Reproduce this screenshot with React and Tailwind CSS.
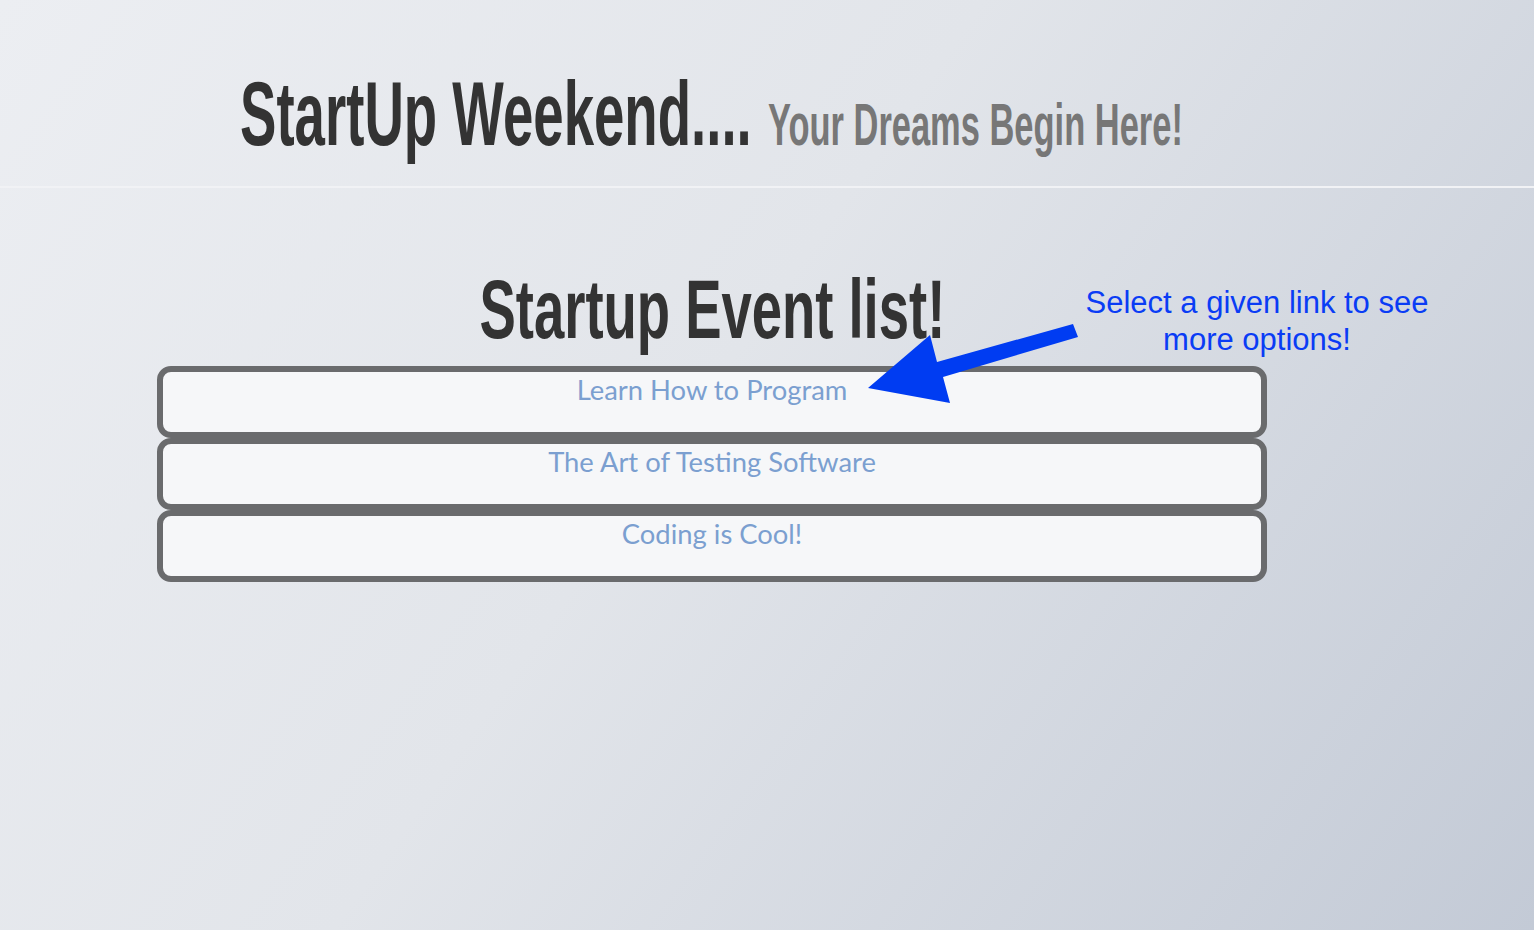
import React from "react";

const events = [
  "Learn How to Program",
  "The Art of Testing Software",
  "Coding is Cool!",
];

export default function App() {
  return (
    <div className="relative min-h-screen w-full overflow-hidden bg-[linear-gradient(125deg,#eceef2_0%,#e2e5ea_45%,#c3cad6_100%)]">
      {/* header */}
      <div className="h-[188px] border-b-2 border-[#f1f2f5] pt-[68px] pl-[240px]">
        <div className="flex items-baseline whitespace-nowrap font-['Liberation_Sans',Arial,sans-serif] font-bold leading-none">
          <div className="w-[528px]">
            <span className="inline-block origin-left scale-x-[0.6] text-[91px] text-[#333333]">
              StartUp Weekend....
            </span>
          </div>
          <div>
            <span className="inline-block origin-left scale-x-[0.584] text-[59px] text-[#777777]">
              Your Dreams Begin Here!
            </span>
          </div>
        </div>
      </div>

      {/* event list */}
      <div className="ml-[157px] mt-[79px] w-[1110px]">
        <h1 className="whitespace-nowrap text-center font-['Liberation_Sans',Arial,sans-serif] text-[84px] font-bold leading-none text-[#333333]">
          <span className="inline-block scale-x-[0.648]">Startup Event list!</span>
        </h1>
        <div className="mt-[15px] flex flex-col">
          {events.map((ev) => (
            <a
              key={ev}
              href="#"
              className="block h-[72px] rounded-[14px] border-[6px] border-[#6a6b6d] bg-[#f6f7f9] pt-[2px] text-center font-['Lato',sans-serif] text-[27.4px] leading-[32px] text-[#7b9fd0]"
            >
              {ev}
            </a>
          ))}
        </div>
      </div>

      {/* annotation */}
      <div className="absolute left-[1057px] top-[284px] w-[400px] text-center font-['Liberation_Sans',Arial,sans-serif] text-[31px] leading-[37px] text-[#0a3cf5]">
        Select a given link to see
        <br />
        more options!
      </div>
      <svg
        className="absolute left-[860px] top-[320px]"
        width="230"
        height="90"
        viewBox="0 0 230 90"
      >
        <polygon
          points="8,68 70,15 77,42 213,4 218,17 83,57 90,83"
          fill="#003cf2"
        />
      </svg>
    </div>
  );
}
